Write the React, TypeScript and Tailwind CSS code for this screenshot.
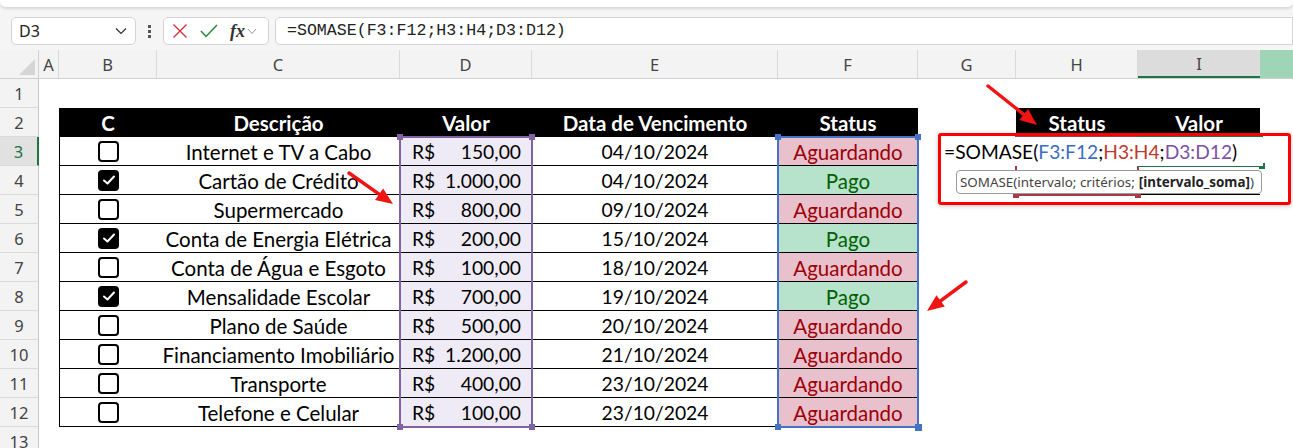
import React from 'react'

type Linha = { c: boolean; d: string; v: string; dt: string; s: 'Aguardando' | 'Pago' }

const LINHAS: Linha[] = [
  { c: false, d: 'Internet e TV a Cabo', v: '150,00', dt: '04/10/2024', s: 'Aguardando' },
  { c: true, d: 'Cartão de Crédito', v: '1.000,00', dt: '04/10/2024', s: 'Pago' },
  { c: false, d: 'Supermercado', v: '800,00', dt: '09/10/2024', s: 'Aguardando' },
  { c: true, d: 'Conta de Energia Elétrica', v: '200,00', dt: '15/10/2024', s: 'Pago' },
  { c: false, d: 'Conta de Água e Esgoto', v: '100,00', dt: '18/10/2024', s: 'Aguardando' },
  { c: true, d: 'Mensalidade Escolar', v: '700,00', dt: '19/10/2024', s: 'Pago' },
  { c: false, d: 'Plano de Saúde', v: '500,00', dt: '20/10/2024', s: 'Aguardando' },
  { c: false, d: 'Financiamento Imobiliário', v: '1.200,00', dt: '21/10/2024', s: 'Aguardando' },
  { c: false, d: 'Transporte', v: '400,00', dt: '23/10/2024', s: 'Aguardando' },
  { c: false, d: 'Telefone e Celular', v: '100,00', dt: '23/10/2024', s: 'Aguardando' },
]

const cell = "font-['Lato',sans-serif] text-[20.5px] text-black"

function RowHead({ n, active }: { n: number; active?: boolean }) {
  return (
    <div
      className={
        "w-[39px] h-[29px] shrink-0 flex items-center justify-center pt-[2px] border-b border-[#dadada] font-['Noto_Sans',sans-serif] text-[16.5px] " +
        (active ? 'bg-[#e1e1e1] text-[#217346] border-r-2 border-r-[#217346]' : 'bg-[#f3f3f3] text-[#444] border-r border-r-[#c8c8c8]')
      }
    >
      {n}
    </div>
  )
}

function Caixa({ on }: { on: boolean }) {
  if (on)
    return (
      <div className="w-[21px] h-[21px] rounded-[4px] bg-black flex items-center justify-center">
        <svg width="14" height="12" viewBox="0 0 14 12">
          <path d="M2 6.5 L5.5 9.5 L12 2.5" stroke="white" strokeWidth="2" fill="none" strokeLinecap="round" strokeLinejoin="round" />
        </svg>
      </div>
    )
  return <div className="w-[21px] h-[21px] rounded-[4px] border-[2.5px] border-black bg-white" />
}

function Seta({ x1, y1, x2, y2 }: { x1: number; y1: number; x2: number; y2: number }) {
  const a = Math.atan2(y2 - y1, x2 - x1)
  const L = 17
  const W = 7
  const bx = x2 - L * Math.cos(a)
  const by = y2 - L * Math.sin(a)
  const p1 = `${bx + W * Math.sin(a)},${by - W * Math.cos(a)}`
  const p2 = `${bx - W * Math.sin(a)},${by + W * Math.cos(a)}`
  return (
    <g>
      <line x1={x1} y1={y1} x2={bx + 3 * Math.cos(a)} y2={by + 3 * Math.sin(a)} stroke="#f01414" strokeWidth="3.5" strokeLinecap="round" />
      <polygon points={`${x2},${y2} ${p1} ${p2}`} fill="#f01414" />
    </g>
  )
}

function Handle({ x, y, c, s = 6 }: { x: number; y: number; c: string; s?: number }) {
  return <div className="absolute" style={{ left: x - s / 2, top: y - s / 2, width: s, height: s, background: c }} />
}

export default function App() {
  return (
    <div className="relative w-[1293px] h-[448px] overflow-hidden bg-white">
      {/* barra de fórmulas */}
      <div className="bg-[#f5f5f5] h-[50px]">
        <div className="h-[8px] bg-white border-b border-[#dcdcdc] shadow-[0_1px_3px_rgba(0,0,0,0.12)] rounded-b-[6px]" />
        <div className="flex items-center h-[34px] mt-[6px] pl-[11px]">
          <div className="w-[125px] h-[28px] bg-white border border-[#d4d4d4] rounded-[5px] flex items-center justify-between pl-[7px] pr-[8px] font-['Noto_Sans',sans-serif] text-[16px] text-[#222]">
            <span>D3</span>
            <svg width="12" height="8" viewBox="0 0 12 8">
              <path d="M1 1.5 L6 6.5 L11 1.5" stroke="#333" strokeWidth="1.2" fill="none" />
            </svg>
          </div>
          <div className="w-[27px] flex flex-col items-center gap-[2px]">
            <div className="w-[3px] h-[3px] bg-[#555]" />
            <div className="w-[3px] h-[3px] bg-[#555]" />
            <div className="w-[3px] h-[3px] bg-[#555]" />
          </div>
          <div className="w-[106px] h-[28px] bg-white border border-[#d4d4d4] rounded-[5px] flex items-center pl-[8px] gap-[12px]">
            <svg width="16" height="16" viewBox="0 0 16 16">
              <path d="M1.5 1.5 L14.5 14.5 M14.5 1.5 L1.5 14.5" stroke="#d13438" strokeWidth="1.4" />
            </svg>
            <svg width="18" height="14" viewBox="0 0 18 14">
              <path d="M1 7 L6 12.5 L17 1" stroke="#26893a" strokeWidth="1.5" fill="none" />
            </svg>
            <div className="flex items-center gap-[2px]">
              <span className="font-['Liberation_Serif',serif] italic font-bold text-[18px] text-[#333] leading-none">fx</span>
              <svg width="10" height="7" viewBox="0 0 10 7">
                <path d="M1 1 L5 5.5 L9 1" stroke="#999" strokeWidth="1" fill="none" />
              </svg>
            </div>
          </div>
          <div className="ml-[6px] flex-1 h-[28px] bg-white border border-[#d4d4d4] rounded-l-[5px] flex items-center pl-[11px] font-['Liberation_Mono',monospace] text-[16.6px] text-[#222]">
            =SOMASE(F3:F12;H3:H4;D3:D12)
          </div>
        </div>
      </div>

      {/* cabeçalho das colunas */}
      <div className="flex h-[29px] bg-[#f3f3f3] border-b border-[#d0d0d0] font-['Noto_Sans',sans-serif] text-[16.5px] text-[#444]">
        <div className="w-[39px] shrink-0 border-r border-[#d0d0d0] relative">
          <div className="absolute right-[3px] bottom-[3px] w-0 h-0 border-l-[16px] border-l-transparent border-b-[16px] border-b-[#d5d5d5]" />
        </div>
        <div className="w-[20px] shrink-0 border-r border-[#d9d9d9] flex items-center justify-center pt-[3px]">A</div>
        <div className="w-[98px] shrink-0 border-r border-[#d9d9d9] flex items-center justify-center pt-[3px]">B</div>
        <div className="w-[243px] shrink-0 border-r border-[#d9d9d9] flex items-center justify-center pt-[3px]">C</div>
        <div className="w-[132px] shrink-0 border-r border-[#d9d9d9] flex items-center justify-center pt-[3px]">D</div>
        <div className="w-[246px] shrink-0 border-r border-[#d9d9d9] flex items-center justify-center pt-[3px]">E</div>
        <div className="w-[140px] shrink-0 border-r border-[#d9d9d9] flex items-center justify-center pt-[3px]">F</div>
        <div className="w-[98px] shrink-0 border-r border-[#d9d9d9] flex items-center justify-center pt-[3px]">G</div>
        <div className="w-[122px] shrink-0 border-r border-[#d9d9d9] flex items-center justify-center pt-[3px]">H</div>
        <div className="w-[122px] shrink-0 bg-[#dcdcdc] border-b-2 border-[#217346] flex items-center justify-center pt-[3px]">I</div>
        <div className="flex-1 bg-[#9fd5b7]" />
      </div>

      {/* linha 1 */}
      <div className="flex">
        <RowHead n={1} />
      </div>

      {/* linha 2: cabeçalhos */}
      <div className={'flex ' + cell}>
        <RowHead n={2} />
        <div className="w-[20px] shrink-0" />
        <div className="w-[859px] shrink-0 h-[29px] bg-black text-white font-bold flex pt-[2px]">
          <div className="w-[98px] flex items-center justify-center">C</div>
          <div className="w-[243px] flex items-center justify-center">Descrição</div>
          <div className="w-[132px] flex items-center justify-center">Valor</div>
          <div className="w-[246px] flex items-center justify-center">Data de Vencimento</div>
          <div className="w-[140px] flex items-center justify-center">Status</div>
        </div>
        <div className="w-[98px] shrink-0" />
        <div className="w-[244px] shrink-0 h-[29px] bg-black text-white font-bold flex pt-[2px]">
          <div className="w-[122px] flex items-center justify-center">Status</div>
          <div className="w-[122px] flex items-center justify-center">Valor</div>
        </div>
      </div>

      {/* linhas 3 a 12 */}
      {LINHAS.map((l, i) => (
        <div key={i} className={'flex ' + cell}>
          <RowHead n={i + 3} active={i === 0} />
          <div className="w-[20px] shrink-0" />
          <div className="w-[98px] shrink-0 h-[29px] border-l border-b border-black flex items-center justify-center">
            <Caixa on={l.c} />
          </div>
          <div className="w-[243px] shrink-0 h-[29px] border-b border-black flex items-center justify-center whitespace-nowrap pt-[2px]">{l.d}</div>
          <div className="w-[132px] shrink-0 h-[29px] border-b border-black bg-[#efebf6] flex items-center justify-between pl-[12px] pr-[11px] pt-[2px] text-[19.3px]">
            <span>R$</span>
            <span>{l.v}</span>
          </div>
          <div className="w-[246px] shrink-0 h-[29px] border-b border-black flex items-center justify-center pt-[2px] text-[19.3px]">{l.dt}</div>
          <div
            className={
              'w-[140px] shrink-0 h-[29px] border-b border-black flex items-center justify-center pt-[2px] ' +
              (l.s === 'Pago' ? 'bg-[#b7e2cc] text-[#006100]' : 'bg-[#e8c1cd] text-[#9c0006]')
            }
          >
            {l.s}
          </div>
          <div className="w-[98px] shrink-0" />
          {i < 2 && (
            <>
              <div className="w-[122px] shrink-0 h-[29px] border-b border-black" />
              <div className="w-[122px] shrink-0 h-[29px] border-b border-black" />
            </>
          )}
        </div>
      ))}

      <div className="flex">
        <RowHead n={13} />
      </div>

      {/* seleção D3:D12 */}
      <div className="absolute left-[399px] top-[136px] w-[134px] h-[292px] border-2 border-[#8064a2]" />
      <Handle x={400} y={137} c="#8064a2" />
      <Handle x={532} y={137} c="#8064a2" />
      <Handle x={400} y={427} c="#8064a2" />
      <Handle x={532} y={427} c="#8064a2" />

      {/* seleção F3:F12 */}
      <div className="absolute left-[777px] top-[136px] w-[142px] h-[292px] border-2 border-[#4472c4]" />
      <Handle x={778} y={137} c="#4472c4" />
      <Handle x={918} y={137} c="#4472c4" />
      <Handle x={778} y={427} c="#4472c4" />
      <Handle x={918} y={427} c="#4472c4" s={7} />

      {/* seleção H3:H4 e I3 */}
      <div className="absolute left-[1015px] top-[136px] w-[124px] h-[60px] border-2 border-[#a83a4c]" />
      <Handle x={1016} y={195} c="#a83a4c" />
      <Handle x={1138} y={195} c="#a83a4c" />
      <div className="absolute left-[1137px] top-[136px] w-[126px] h-[31px] border-2 border-[#217346]" />
      <Handle x={1262} y={166} c="#217346" />

      {/* edição da célula */}
      <div className="absolute left-[938px] top-[133px] w-[353px] h-[72px] border-[3px] border-[#f00] rounded-[3px] shadow-[0_1px_4px_rgba(0,0,0,0.25)]" />
      <div className="absolute left-[941px] top-[137px] w-[322px] h-[29px] bg-white flex items-center pl-[3px] pt-[1px] font-['Lato',sans-serif] text-[19.2px] text-black whitespace-nowrap">
        =SOMASE(<span className="text-[#3a6ec4]">F3:F12</span>;<span className="text-[#c0392b]">H3:H4</span>;<span className="text-[#7b52a8]">D3:D12</span>)
      </div>
      <div className="absolute left-[956px] top-[170px] w-[306px] h-[24px] bg-white border border-[#9a9a9a] rounded-[4px] flex items-center pl-[3px] font-['Noto_Sans',sans-serif] text-[13.4px] text-[#444] whitespace-nowrap">
        <span>SOMASE(intervalo; critérios;</span>
        <b className="ml-[4px] text-[#222]">[intervalo_soma]</b>
        <span>)</span>
      </div>

      {/* setas */}
      <svg className="absolute left-0 top-0 pointer-events-none" width="1293" height="448">
        <Seta x1={988} y1={86} x2={1037} y2={125} />
        <Seta x1={349} y1={173} x2={393} y2={204} />
        <Seta x1={966} y1={282} x2={927} y2={311} />
      </svg>
    </div>
  )
}
